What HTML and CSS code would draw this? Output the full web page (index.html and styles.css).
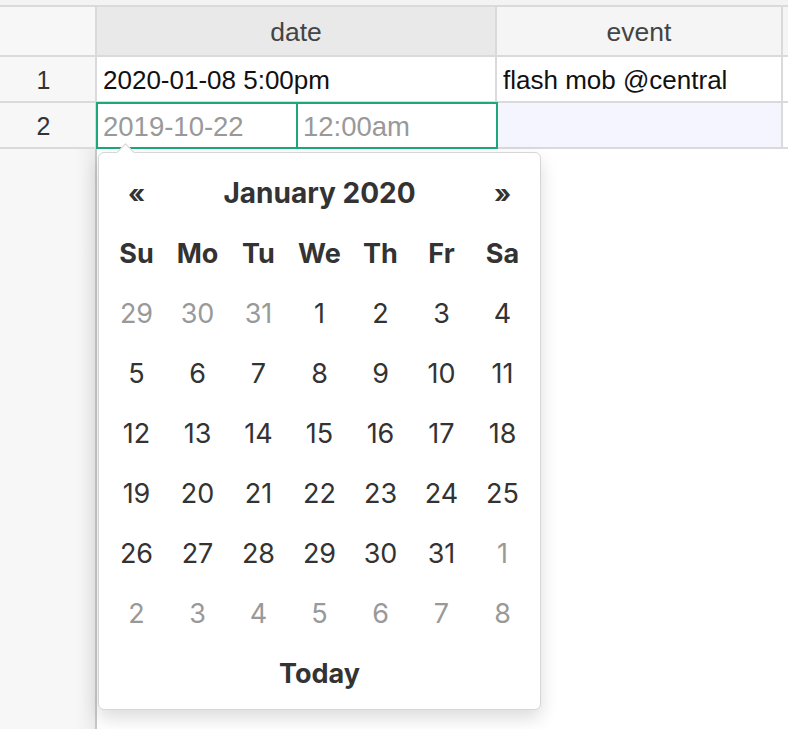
FILE: index.html
```html
<!DOCTYPE html>
<html>
<head>
	<title>Sheet date editor</title>
	<link rel="stylesheet" href="styles.css">
</head>
<body>
	<div class="sheet">
		<!-- grid: row header column + date + event + next -->
		<div class="grid">
			<div class="corner"></div>
			<div class="colhead colhead-active">date</div>
			<div class="colhead">event</div>
			<div class="colhead"></div>

			<div class="rowhead">1</div>
			<div class="cell">2020-01-08 5:00pm</div>
			<div class="cell">flash mob @central</div>
			<div class="cell"></div>

			<div class="rowhead">2</div>
			<div class="cell cell-editing">
				<div class="editor">
					<div class="editor-part">2019-10-22</div>
					<div class="editor-part editor-time">12:00am</div>
				</div>
			</div>
			<div class="cell cell-row-active"></div>
			<div class="cell"></div>
		</div>

		<div class="below">
			<div class="gutter"></div>
		</div>

		<!-- date picker popup -->
		<div class="picker">
			<div class="picker-arrow"></div>
			<div class="cal">
				<div class="cal-nav">&laquo;</div>
				<div class="cal-title">January 2020</div>
				<div class="cal-nav">&raquo;</div>

				<div class="cal-dow">Su</div>
				<div class="cal-dow">Mo</div>
				<div class="cal-dow">Tu</div>
				<div class="cal-dow">We</div>
				<div class="cal-dow">Th</div>
				<div class="cal-dow">Fr</div>
				<div class="cal-dow">Sa</div>
			</div>
			<div class="cal cal-days" id="days"></div>
			<div class="cal-today">Today</div>
		</div>
	</div>

	<script>
var daysBox = document.getElementById("days");
var html = "";
// January 2020 starts on a Wednesday; show 6 full weeks
var prevDays = [29, 30, 31];
for (var i = 0; i < prevDays.length; i++) {
  html += '<div class="cal-day cal-day-other">' + prevDays[i] + '</div>';
}
for (var d = 1; d <= 31; d++) {
  html += '<div class="cal-day">' + d + '</div>';
}
for (var n = 1; n <= 8; n++) {
  html += '<div class="cal-day cal-day-other">' + n + '</div>';
}
daysBox.innerHTML = html;
	</script>
</body>
</html>
```

FILE: styles.css
```css
/* page */
body {
  margin: 0;
  background: #fff;
  font-family: "Liberation Sans", Arial, sans-serif;
}

.sheet {
  position: relative;
  width: 788px;
  height: 729px;
  overflow: hidden;
  display: flex;
  flex-direction: column;
}

/* grid lines are the background showing through the gaps */
.grid {
  display: grid;
  grid-template-columns: 95px 398px 284px 20px;
  grid-template-rows: 48px 44px 44px;
  gap: 2px;
  padding: 2px 0 2px;
  background: #dadada;
  border-top: 5px solid #f3f3f3;
}

.corner {
  background: #f7f7f7;
}

.colhead {
  background: #f5f5f5;
  color: #444;
  font-size: 26.5px;
  display: flex;
  align-items: center;
  justify-content: center;
  padding-top: 2px;
}

.colhead-active {
  background: #e9e9e9;
}

.rowhead {
  background: #f7f7f7;
  color: #333;
  font-size: 25px;
  display: flex;
  align-items: center;
  justify-content: center;
  padding: 2px 8px 0 0;
}

.cell {
  background: #fff;
  color: #111;
  font-size: 26px;
  display: flex;
  align-items: center;
  padding: 2px 0 0 6px;
  white-space: nowrap;
  overflow: hidden;
}

.cell-row-active {
  background: #f4f5fe;
}

.cell-editing {
  position: relative;
  overflow: visible;
  padding: 0;
}

.editor {
  position: absolute;
  top: -1px;
  left: -1px;
  right: -3px;
  bottom: -2px;
  border: 2px solid #1ca878;
  display: flex;
  background: #fff;
}

.editor-part {
  flex: 1;
  color: #999;
  font-size: 27.5px;
  display: flex;
  align-items: center;
  padding: 3px 0 0 5px;
}

.editor-time {
  border-left: 2px solid #1ca878;
}

/* empty area under the rows */
.below {
  flex: 1;
  display: flex;
}

.gutter {
  width: 95px;
  background: linear-gradient(to right, #f7f7f7 80%, #ececec);
  border-right: 2px solid #c8c8c8;
}

/* popup */
.picker {
  position: absolute;
  left: 98px;
  top: 152px;
  width: 443px;
  height: 558px;
  box-sizing: border-box;
  background: #fff;
  border: 1px solid #d6d6d6;
  border-radius: 6px;
  box-shadow: 0 8px 18px rgba(0, 0, 0, 0.14);
  padding: 10px 7px 0;
  font-family: Inter, "Noto Sans", sans-serif;
  color: #333;
}

.picker-arrow {
  position: absolute;
  top: -7px;
  left: 20px;
  width: 12px;
  height: 12px;
  background: #fff;
  border-left: 1px solid #d6d6d6;
  border-top: 1px solid #d6d6d6;
  transform: rotate(45deg);
}

.cal {
  display: grid;
  grid-template-columns: repeat(7, 61px);
  grid-auto-rows: 60px;
  font-size: 27px;
  text-align: center;
}

.cal > div {
  display: flex;
  align-items: center;
  justify-content: center;
}

.cal-nav {
  font-weight: 700;
  font-size: 26px;
}

.cal-title {
  grid-column: span 5;
  font-weight: 700;
  font-size: 28px;
}

.cal-dow {
  font-weight: 700;
}

.cal-day-other {
  color: #999;
}

.cal-today {
  height: 60px;
  display: flex;
  align-items: center;
  justify-content: center;
  font-size: 27px;
  font-weight: 700;
}
```
